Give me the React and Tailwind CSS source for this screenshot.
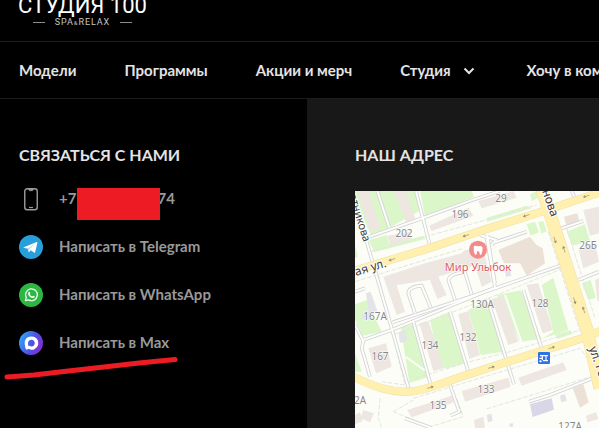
import React from "react";

const parks = [
  "15,18 80,18 200,18 208,78 118,128 62,150 15,40",
  "210,18 365,18 372,36 225,95",
  "56,165 110,150 118,178 222,152 226,162 72,202",
  "15,358 50,345 95,440 38,452 15,405",
  "15,505 35,560 15,562",
  "152,425 195,418 240,575 178,594",
  "240,405 300,380 345,535 290,550 270,545",
  "355,375 412,345 460,500 392,510",
  "440,330 512,316 575,462 510,470",
  "575,300 610,278 655,435 575,462 610,440",
  "615,448 662,436 668,446 622,462",
  "410,98 530,62 545,70 412,110",
  "530,118 555,110 567,142 542,152",
  "565,112 580,108 590,138 574,146",
  "650,140 705,118 720,168 668,182",
  "540,28 560,18 565,38 545,48",
  "695,295 722,284 738,338 715,345",
  "15,180 24,216 15,218",
];

const buildings = [
  "22,18 55,18 92,128 60,142",
  "130,18 168,18 196,100 168,112",
  "238,122 355,68 370,92 245,138",
  "112,152 180,140 186,162 120,180",
  "385,48 490,18 500,38 395,70",
  "100,275 225,235 335,205 345,195 400,195 425,290 395,305 375,240 265,275 290,330 262,342 240,285 140,300 165,380 140,390",
  "208,415 235,408 282,550 250,558",
  "325,388 355,378 390,510 358,522",
  "425,342 458,332 505,470 475,480",
  "530,300 565,295 608,435 578,445",
  "55,490 108,475 125,545 78,565",
  "172,675 305,632 312,652 185,697",
  "335,618 475,578 482,605 345,650",
  "505,578 640,532 650,555 515,602",
  "700,75 747,65 747,145 720,152",
  "685,190 735,175 747,230 700,250",
  "735,285 747,280 747,350 742,345",
  "372,705 400,695 405,729 375,729",
  "708,692 738,682 745,702 712,712",
  "15,690 30,682 38,708 15,718",
  "40,675 72,685 60,712 32,700",
];

const tanBuildings = [
  "445,195 540,155 560,180 578,190 585,235 530,272 510,235 462,235",
  "642,95 682,85 688,110 648,120",
  "668,610 700,598 716,652 690,668",
];

const lanes = [
  "M82,18 L118,128",
  "M198,18 L238,175",
  "M50,158 L210,102 L370,44 L450,18",
  "M15,60 L50,170 L125,430 L178,618",
  "M15,320 L45,310",
  "M40,465 L125,435 L435,308 L410,160",
  "M128,412 L430,312 L630,242",
  "M195,385 L175,325 Q175,305 215,302 L242,368",
  "M315,345 L295,285 Q300,265 345,262 L365,328",
  "M390,150 L438,165 L425,180",
  "M435,172 L530,140",
  "M435,295 L412,150",
  "M15,420 L40,468 L35,490 L60,575",
  "M190,410 L243,602",
  "M300,380 L355,560",
  "M412,340 L492,598",
  "M520,315 L575,490",
  "M300,600 L328,680 L302,692",
  "M165,700 L245,729",
  "M537,650 L600,630 L747,572",
  "M635,130 L700,108",
  "M685,285 L747,260",
  "M665,18 L675,40",
];

const footpaths = [
  "M60,200 L225,155 L390,110 L560,60",
  "M15,290 L240,220 L340,190",
  "M80,250 L165,600 L95,590",
  "M130,450 L440,330 L640,250",
  "M195,580 L360,530 L480,500 L690,435",
  "M190,640 L370,585 L690,490 L720,530",
  "M130,680 L190,645 M130,680 L240,725 L340,695 L320,640",
  "M90,640 L85,700 L95,729",
  "M410,672 L740,570",
  "M595,140 L690,440",
  "M650,130 L735,400",
];

const arrows = [
  [125, 224, 162], [347, 152, 162], [528, 92, 162], [708, 34, 162],
  [242, 607, -16], [425, 547, -16], [606, 488, -16],
  [615, 166, 72], [642, 192, 252], [674, 348, 72], [701, 374, 252],
];

const houseNumbers = [
  ["29", 146, 11], ["196", 105, 27], ["202", 49, 46], ["26Б", 233, 58],
  ["130А", 127, 117], ["128", 185, 116], ["167А", 20, 129],
  ["134", 75, 158], ["132", 113, 150], ["167", 25, 169],
  ["133", 131, 202], ["135", 83, 218], ["2А", 5, 213], ["127А", 215, 239],
];

function StreetMap() {
  return (
    <svg
      className="block h-[237px] w-full"
      viewBox="0 0 244 237"
      preserveAspectRatio="xMinYMin slice"
      role="img"
      aria-label="Карта"
    >
      <rect width="244" height="237" fill="#fcfdf6" />
      <g transform="translate(-5 -6) scale(0.33333)">
        {parks.map((p) => <polygon key={p} points={p} fill="#dbf7c9" />)}
        {buildings.map((p) => <polygon key={p} points={p} fill="#ede6e1" />)}
        {tanBuildings.map((p) => <polygon key={p} points={p} fill="#ebe1d6" />)}
        <g fill="#e3e3e8">
          <polygon points="48,325 62,320 82,378 60,400 38,404 34,390 56,380" />
          <polygon points="145,442 165,436 172,468 150,474" />
          <polygon points="465,258 480,254 484,272 468,276" />
          <polygon points="630,632 645,628 650,648 634,652" />
          <polygon points="410,690 424,686 428,708 414,712" />
          <polygon points="478,716 488,714 490,724 480,726" />
        </g>
        <polygon points="540,658 605,640 612,674 548,696" fill="#d9d6e8" />
        <g fill="none" stroke="#e4e4e1" strokeWidth="3" strokeDasharray="14 5">
          {footpaths.map((d) => <path key={d} d={d} />)}
        </g>
        <g fill="none" stroke="#d3d3d5" strokeWidth="11">
          {lanes.map((d) => <path key={d} d={d} />)}
        </g>
        <g fill="none" stroke="#fdfdfc" strokeWidth="6">
          {lanes.map((d) => <path key={d} d={d} />)}
          <path d="M168,516 L224,556" />
          <path d="M465,330 L514,470" />
        </g>
        <g fill="none" stroke="#f3e3ad">
          <path d="M10,258 L230,192 L400,135 L560,85 L750,22" strokeWidth="25" />
          <path d="M10,575 C70,605 120,622 180,620 C235,615 280,592 350,570 L520,515 L690,462 L750,438" strokeWidth="25" />
          <path d="M575,10 L635,195 L710,430 L750,610" strokeWidth="39" />
        </g>
        <g fill="none" stroke="#fff0b0">
          <path d="M10,258 L230,192 L400,135 L560,85 L750,22" strokeWidth="21" />
          <path d="M10,575 C70,605 120,622 180,620 C235,615 280,592 350,570 L520,515 L690,462 L750,438" strokeWidth="21" />
          <path d="M575,10 L635,195 L710,430 L750,610" strokeWidth="35" />
        </g>
        {arrows.map(([x, y, r]) => (
          <g key={`${x}-${y}`} transform={`translate(${x} ${y}) rotate(${r})`}>
            <path d="M-11,0 H6" stroke="#aaa688" strokeWidth="2.5" />
            <path d="M2,-5 L10,0 L2,5 Z" fill="#96937a" />
          </g>
        ))}
        <circle cx="384" cy="194" r="27" fill="#f58a8a" />
        <path
          d="M371,187 Q372,180 384,184 Q396,180 398,188 Q398,202 393,210 Q389,212 388,201 Q384,195 381,201 Q380,212 376,210 Q370,202 371,187 Z"
          fill="#fff"
        />
        <rect x="564" y="501" width="36" height="36" rx="4" fill="#2e72e4" />
        <path
          d="M570,512 H594 M577,512 V526 M588,512 V527 M579,527 H594 M568,520 H577 M571,526 V532 M568,529 H575"
          fill="none" stroke="#fff" strokeWidth="3.5"
        />
      </g>
      <g
        className="font-['Noto_Sans',sans-serif] text-[10px]"
        fill="#88868a" stroke="#fff" strokeWidth="1" paintOrder="stroke" textAnchor="middle"
      >
        {houseNumbers.map(([label, x, y]) => (
          <text key={label} x={x} y={y}>{label}</text>
        ))}
      </g>
      <text
        x="123" y="80" textAnchor="middle" fill="#e0585d" stroke="#fff" strokeWidth="1" paintOrder="stroke"
        className="font-['Noto_Sans',sans-serif] text-[11px]"
      >
        Мир Улыбок
      </text>
      <g
        className="font-['Noto_Sans',sans-serif] text-[12px]"
        fill="#3b3b3b" stroke="#fff" strokeWidth="2" paintOrder="stroke"
      >
        <text transform="translate(1 85) rotate(-17)">ая ул.</text>
        <text transform="translate(187 0) rotate(71)">нова</text>
        <text transform="translate(234 157) rotate(71)">ул. Ге</text>
        <text transform="translate(-6 4) rotate(73)" className="text-[11px]">отникова</text>
      </g>
    </svg>
  );
}

function PhoneIcon() {
  return (
    <svg className="size-6" viewBox="0 0 24 24" fill="none" stroke="#9b9b9b" aria-hidden="true">
      <rect x="5.75" y="1.75" width="12.5" height="21" rx="2.5" strokeWidth="1.4" />
      <path d="M9.5 2 L10.5 3.7 H13.5 L14.5 2 Z" fill="#9b9b9b" strokeWidth="0.6" />
      <path d="M10 20.5 H14" strokeWidth="1.2" />
    </svg>
  );
}

function TelegramIcon() {
  return (
    <svg className="size-6" viewBox="0 0 24 24" aria-hidden="true">
      <circle cx="12" cy="12" r="12" fill="#279fda" />
      <path d="M4.8 12.3 L17.6 7.1 Q18.6 6.8 18.3 8 L16.2 17.1 Q15.9 18.2 14.9 17.6 L11.8 15.3 L10.2 16.9 Q9.5 17.4 9.4 16.4 L8.6 13.6 L5 12.9 Q4.2 12.6 4.8 12.3 Z" fill="#fff" />
      <path d="M8.7 13.5 L15.6 9.2 L10.6 14 L9.8 16.6 Z" fill="#b9dcf0" />
    </svg>
  );
}

function WhatsAppIcon() {
  return (
    <svg className="size-6" viewBox="0 0 24 24" aria-hidden="true">
      <circle cx="12" cy="12" r="12" fill="#2db742" />
      <path d="M6.4 17.7 L7.3 14.6 A5.9 5.9 0 1 1 9.6 16.9 Z" fill="none" stroke="#eefaf0" strokeWidth="1.3" strokeLinejoin="round" />
      <path d="M10 8.7 Q10.6 8.5 10.8 9 L11.3 10.3 Q11.3 10.7 10.7 11.3 Q11.6 12.9 13.3 13.6 L14.1 12.7 Q14.4 12.5 15.6 13.2 Q15.9 13.4 15.5 14.3 Q14.7 15.3 13.5 15 Q9.8 13.9 9.1 10.9 Q8.9 9.5 10 8.7 Z" fill="#fff" />
    </svg>
  );
}

function MaxIcon() {
  return (
    <svg className="size-6" viewBox="0 0 24 24" aria-hidden="true">
      <defs>
        <linearGradient id="max-fill" x1="0" y1="0.3" x2="1" y2="0.75">
          <stop offset="0" stopColor="#2fa6fa" />
          <stop offset="0.5" stopColor="#4b57e6" />
          <stop offset="1" stopColor="#8f25cf" />
        </linearGradient>
      </defs>
      <circle cx="12" cy="12" r="12" fill="url(#max-fill)" />
      <path
        fillRule="evenodd"
        d="M12.3 5.5 A6.6 6.6 0 1 1 9.4 17.7 Q8.4 18.8 7.1 18.5 Q6.2 17.5 5.7 13 Q5.3 5.5 12.3 5.5 Z M12.2 8.8 A3.3 3.3 0 0 0 9 12.5 Q9 14.2 9.6 15.2 Q10.2 14.7 10.6 14.8 A3.3 3.3 0 1 0 12.2 8.8 Z"
        fill="#fff"
      />
    </svg>
  );
}

const messengers = [
  { label: "Написать в Telegram", Icon: TelegramIcon },
  { label: "Написать в WhatsApp", Icon: WhatsAppIcon },
  { label: "Написать в Max", Icon: MaxIcon },
];

export default function App() {
  return (
    <div className="overflow-hidden bg-black font-['Lato','Open_Sans',sans-serif] text-base text-[#e4e4e4]">
      <header>
        <div className="flex h-[42px] items-end border-b border-[#1c1c1c] px-[18px] pb-3">
          <a href="#" className="flex flex-col items-center whitespace-nowrap text-white">
            <span className="font-['Roboto',sans-serif] text-[22px] leading-5">СТУДИЯ 100</span>
            <span className="flex items-center gap-2.5 font-['Roboto',sans-serif] text-[9px] leading-3 tracking-widest text-[#c8c8c8]">
              <span className="h-px w-3 bg-[#8c8c8c]" />
              <span>SPA<span className="text-[6px]">&amp;</span>RELAX</span>
              <span className="h-px w-3 bg-[#8c8c8c]" />
            </span>
          </a>
        </div>
        <nav className="flex h-[57px] items-center gap-12 border-b border-[#1c1c1c] px-[19px] pb-px text-[15px] leading-6 font-bold whitespace-nowrap">
          <a href="#">Модели</a>
          <a href="#">Программы</a>
          <a href="#">Акции и мерч</a>
          <button type="button" className="flex items-center gap-2">
            Студия
            <svg className="size-5" viewBox="0 0 20 20" fill="none" stroke="#e4e4e4" strokeWidth="2" aria-hidden="true">
              <path d="M5.500 8.500 L10 13 L14.500 8.500" />
            </svg>
          </button>
          <a href="#">Хочу в команду</a>
        </nav>
      </header>

      <main className="grid grid-cols-[307px_1fr]">
        <section className="px-[19px] pt-11">
          <h2 className="leading-6 font-bold">СВЯЗАТЬСЯ С НАМИ</h2>
          <ul className="mt-5 flex flex-col gap-6 text-[15px] leading-6 font-bold text-[#999]">
            <li className="flex h-6 items-center gap-4">
              <PhoneIcon />
              <a href="#" className="relative flex h-6 w-[116px] justify-between leading-[22px]">
                <span>+7</span>
                <span>74</span>
                <span className="absolute top-px left-[18px] h-8 w-[83px] bg-[#ed1c24]" />
              </a>
            </li>
            {messengers.map(({ label, Icon }) => (
              <li key={label}>
                <a href="#" className="flex h-6 gap-4 leading-[22px]">
                  <Icon />
                  <span>{label}</span>
                </a>
              </li>
            ))}
          </ul>
          <svg className="-ml-[15px] block h-6 w-[174px] overflow-visible" viewBox="0 0 174 24" fill="none" aria-hidden="true">
            <path d="M3 22 L30 20 L60 16.500 L100 12 L135 8 L171 4.500" stroke="#ed1c24" strokeWidth="5" strokeLinecap="round" strokeLinejoin="round" />
          </svg>
        </section>
        <section className="bg-[#181818] pt-11 pl-12">
          <h2 className="leading-6 font-bold">НАШ АДРЕС</h2>
          <div className="mt-6">
            <StreetMap />
          </div>
        </section>
      </main>
    </div>
  );
}
